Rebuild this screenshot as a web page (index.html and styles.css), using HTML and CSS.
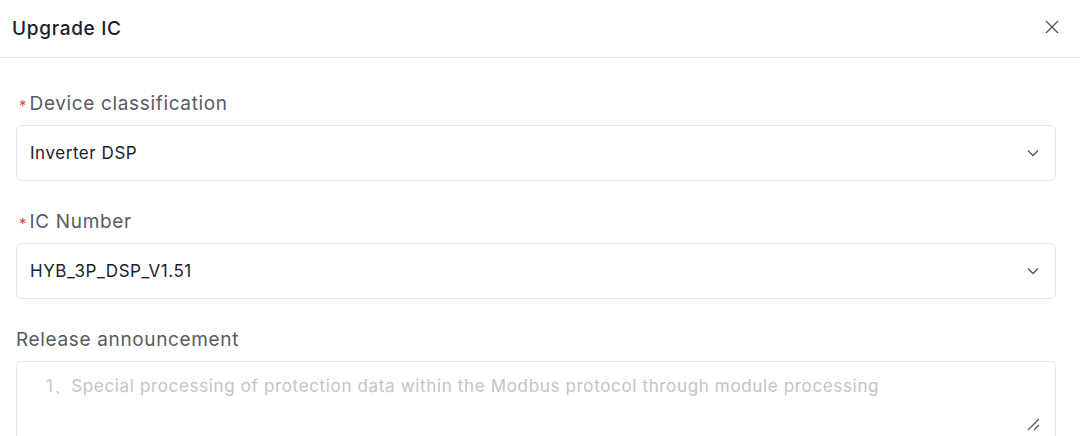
FILE: index.html
```html
<!DOCTYPE html>
<html>
<head>
<meta charset="utf-8">
<link rel="stylesheet" href="styles.css">
</head>
<body>
<div class="dialog">
  <div class="header">
    <div class="title">Upgrade IC</div>
    <button class="close" aria-label="Close">
      <svg width="14" height="14" viewBox="0 0 14 14"><path d="M1 1L13 13M13 1L1 13" stroke="#555" stroke-width="1.4" fill="none"/></svg>
    </button>
  </div>
  <div class="body">
    <div class="field">
      <div class="label"><span class="req">*</span>Device classification</div>
      <div class="select">
        <span class="value">Inverter DSP</span>
        <svg class="chev" width="12" height="8" viewBox="0 0 12 8"><path d="M1 1.5L6 6.5L11 1.5" stroke="#555" stroke-width="1.3" fill="none"/></svg>
      </div>
    </div>
    <div class="field">
      <div class="label"><span class="req">*</span>IC Number</div>
      <div class="select">
        <span class="value">HYB_3P_DSP_V1.51</span>
        <svg class="chev" width="12" height="8" viewBox="0 0 12 8"><path d="M1 1.5L6 6.5L11 1.5" stroke="#555" stroke-width="1.3" fill="none"/></svg>
      </div>
    </div>
    <div class="field">
      <div class="label">Release announcement</div>
      <div class="textarea">
        <span class="placeholder">1、Special processing of protection data within the Modbus protocol through module processing</span>
        <svg class="grip" width="13" height="13" viewBox="0 0 13 13"><path d="M12 1L1 12M12 7L7 12" stroke="#555" stroke-width="1.2" fill="none"/></svg>
      </div>
    </div>
  </div>
</div>
</body>
</html>
```
FILE: styles.css
```css
html, body {
  margin: 0;
  padding: 0;
  background: #fff;
  font-family: Inter, "Noto Sans", sans-serif;
  overflow: hidden;
}
.dialog {
  width: 1080px;
  height: 436px;
  background: #fff;
  overflow: hidden;
}
.header {
  height: 58px;
  border-bottom: 1px solid #e6e6e6;
  display: flex;
  align-items: center;
  justify-content: space-between;
  padding: 0 21px 0 12px;
  box-sizing: border-box;
}
.title {
  font-size: 19px;
  color: #1d1d1f;
  font-weight: 500;
  letter-spacing: 0.7px;
}
.close {
  border: 0;
  background: none;
  padding: 0;
  width: 14px;
  height: 14px;
  display: flex;
  margin-top: -4px;
}
.body {
  padding: 33px 24px 0 16px;
}
.field {
  margin-bottom: 28px;
}
.label {
  font-size: 19px;
  color: #5a5a5f;
  line-height: 26px;
  height: 26px;
  margin-bottom: 8px;
  display: flex;
  align-items: center;
  letter-spacing: 0.65px;
}
.req {
  color: #e0463c;
  font-size: 15px;
  margin: 0 3px 0 3px;
  position: relative;
  top: 2px;
  letter-spacing: 0;
}
.select {
  height: 56px;
  border: 1px solid #e8e8e8;
  border-radius: 6px;
  box-sizing: border-box;
  display: flex;
  align-items: center;
  justify-content: space-between;
  padding: 0 16px 0 13px;
}
.value {
  font-size: 17px;
  color: #1d1d1f;
  letter-spacing: 0.55px;
}
.textarea {
  position: relative;
  height: 100px;
  border: 1px solid #e8e8e8;
  border-radius: 6px;
  box-sizing: border-box;
  padding: 13px 0 0 29px;
}
.placeholder {
  font-size: 17px;
  color: #c4c4c6;
  letter-spacing: 0.65px;
}
.grip {
  position: absolute;
  right: 15px;
  top: 56px;
}
```
